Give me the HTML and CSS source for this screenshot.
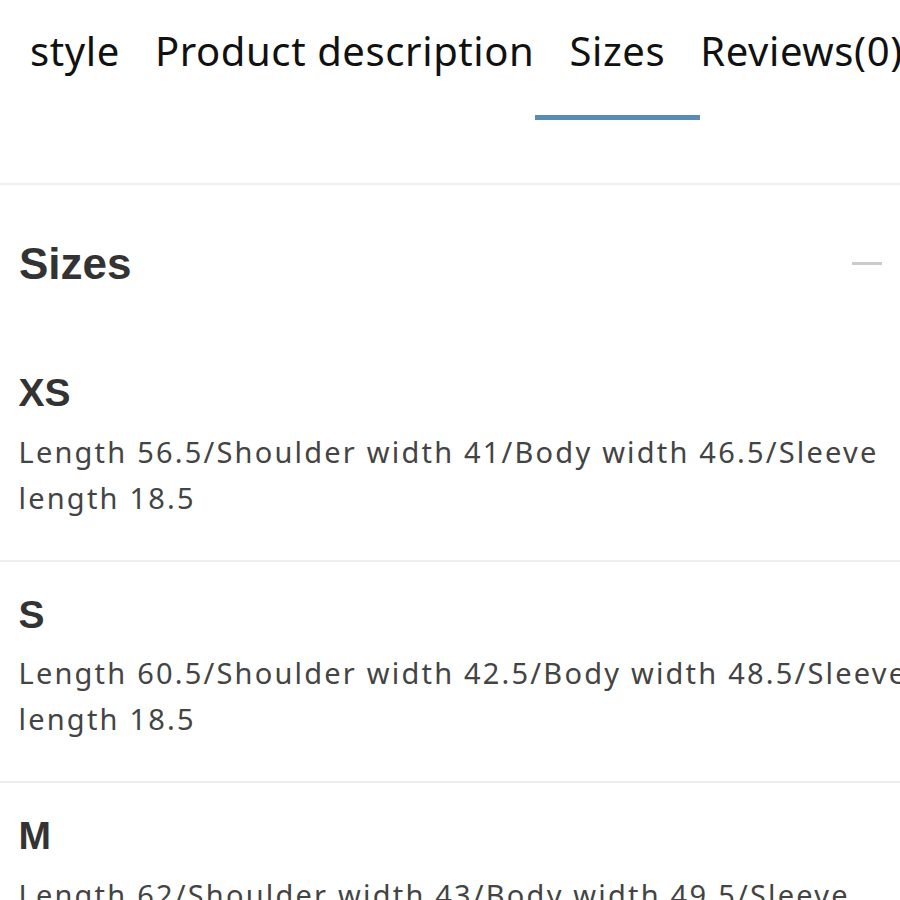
FILE: index.html
```html
<!DOCTYPE html>
<html lang="en">
<head>
<meta charset="utf-8">
<title>Sizes</title>
<link rel="stylesheet" href="styles.css">
</head>
<body>
<div class="page">
  <nav class="tabs">
    <div class="tab">style</div>
    <div class="tab">Product description</div>
    <div class="tab active">Sizes</div>
    <div class="tab">Reviews(0)</div>
  </nav>
  <section class="panel">
    <div class="panel-head">
      <h2 class="panel-title">Sizes</h2>
      <span class="collapse" aria-label="collapse"></span>
    </div>
    <div class="size-item">
      <h3 class="size-name">XS</h3>
      <p class="size-desc">Length 56.5/Shoulder width 41/Body width 46.5/Sleeve<br>length 18.5</p>
    </div>
    <div class="size-item">
      <h3 class="size-name">S</h3>
      <p class="size-desc">Length 60.5/Shoulder width 42.5/Body width 48.5/Sleeve<br>length 18.5</p>
    </div>
    <div class="size-item">
      <h3 class="size-name">M</h3>
      <p class="size-desc">Length 62/Shoulder width 43/Body width 49.5/Sleeve<br>length 18.5</p>
    </div>
  </section>
</div>
</body>
</html>
```
FILE: styles.css
```css
html, body {
  margin: 0;
  padding: 0;
  background: #ffffff;
  overflow: hidden;
}
.page {
  width: 900px;
  overflow: hidden;
  font-family: "Noto Sans", "Noto Sans CJK JP", sans-serif;
}
.tabs {
  display: flex;
  align-items: flex-start;
  padding: 31px 0 0 12.5px;
  height: 152px;
  border-bottom: 2px solid #eeeeee;
  white-space: nowrap;
}
.tab {
  position: relative;
  flex: none;
  padding: 0 17.5px 49px;
  font-size: 40px;
  line-height: 40px;
  letter-spacing: 0.6px;
  color: #111111;
}
.tab.active::after {
  content: "";
  position: absolute;
  left: -17px;
  right: -17px;
  bottom: 0;
  height: 5px;
  background: #5a8ab8;
}
.panel-head {
  display: flex;
  align-items: center;
  justify-content: space-between;
  padding: 53.5px 18px 51.5px 19px;
}
.panel-title {
  margin: 0;
  font-family: "Liberation Sans", Arial, sans-serif;
  font-weight: 700;
  font-size: 44px;
  line-height: 50px;
  color: #333333;
}
.collapse {
  width: 30px;
  height: 3px;
  background: #cccccc;
}
.size-item {
  padding: 30px 0 39px 18.5px;
  border-bottom: 2px solid #eeeeee;
}
.size-name {
  margin: 0 0 12.5px;
  font-family: "Liberation Sans", Arial, sans-serif;
  font-weight: 700;
  font-size: 39px;
  line-height: 46px;
  color: #333333;
}
.size-desc {
  margin: 0;
  font-size: 29px;
  line-height: 46px;
  letter-spacing: 2.2px;
  color: #444444;
  white-space: nowrap;
}
```
